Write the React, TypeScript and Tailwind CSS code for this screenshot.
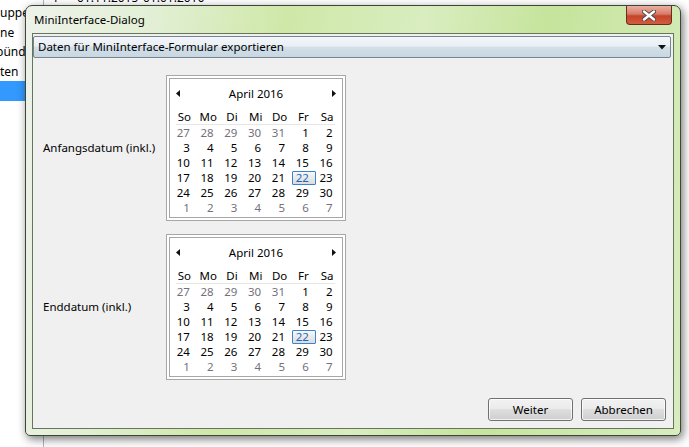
import React from 'react';

const dayNames = ['So', 'Mo', 'Di', 'Mi', 'Do', 'Fr', 'Sa'];

// 27. März bis 7. Mai, sechs Wochen
const cells = [
  ...[27, 28, 29, 30, 31].map(d => ({ d, muted: true })),
  ...Array.from({ length: 30 }, (_, i) => ({ d: i + 1, muted: false })),
  ...[1, 2, 3, 4, 5, 6, 7].map(d => ({ d, muted: true })),
];

function Arrow({ dir }: { dir: 'left' | 'right' }) {
  return (
    <svg width="4" height="7" viewBox="0 0 4 7" className="block">
      <polygon points={dir === 'left' ? '4,0 0,3.5 4,7' : '0,0 4,3.5 0,7'} fill="#111" />
    </svg>
  );
}

function Calendar() {
  return (
    <div className="w-[180px] h-[146px] shrink-0 border border-[#a7a7a7] bg-white p-[2px]">
      <div className="h-full border border-[#a7a7a7] pt-[7px]">
        <div className="relative h-[15px] flex items-center justify-center leading-[15px] text-black">
          <span className="absolute left-[6px] top-[4px]"><Arrow dir="left" /></span>
          April 2016
          <span className="absolute right-[6px] top-[4px]"><Arrow dir="right" /></span>
        </div>
        <div className="mt-[8px] grid grid-cols-[repeat(7,23.8px)] h-[15px] leading-[15px] text-black">
          {dayNames.map(n => (
            <div key={n} className="text-center pl-[5px]">{n}</div>
          ))}
        </div>
        <div className="ml-[6px] w-[159px] h-px bg-[#e6e6e6]" />
        <div className="grid grid-cols-[repeat(7,23.8px)]">
          {cells.map((c, i) => {
            const isToday = !c.muted && c.d === 22;
            return (
              <div
                key={i}
                className={`relative h-[15px] pr-1 text-right leading-[15px] ${c.muted ? 'text-[#74707a]' : 'text-black'}`}
              >
                {isToday && (
                  <span className="absolute left-[3px] top-px h-[14px] w-[24px] rounded-[1px] border border-[#3a84cf] bg-[linear-gradient(to_bottom,#f7f7f7,#dcdcdc)]" />
                )}
                <span className={`relative ${isToday ? 'text-[#1a66c2]' : ''}`}>{c.d}</span>
              </div>
            );
          })}
        </div>
      </div>
    </div>
  );
}

function DateRow({ label }: { label: string }) {
  return (
    <div className="flex items-center pl-[10px]">
      <div className="w-[123px] shrink-0 text-black">{label}</div>
      <Calendar />
    </div>
  );
}

export default function App() {
  return (
    <div className="relative w-[689px] h-[447px] overflow-hidden bg-white font-['Noto_Sans',sans-serif] text-[11.5px]">
      {/* Fenster dahinter */}
      <div className="flex h-full">
        <div className="w-[44px] shrink-0 border-r border-[#a9b6c4] overflow-hidden pt-[3px] text-[12px] text-black">
          <div className="h-[19.5px] leading-[19.5px] whitespace-nowrap">uppen</div>
          <div className="h-[19.5px] leading-[19.5px] whitespace-nowrap">ne</div>
          <div className="h-[19.5px] leading-[19.5px] whitespace-nowrap -ml-[4px]">bünd</div>
          <div className="h-[19.5px] leading-[19.5px] whitespace-nowrap">ten</div>
          <div className="h-[19.5px] bg-[#3399ff]" />
        </div>
        <div className="flex-1 -mt-[9px] text-[12px] text-black">
          <div className="flex h-[14px] leading-[14px] whitespace-nowrap pl-[8px]">
            <span className="w-[25px]">1</span>
            <span className="w-[66px]">01.11.2015</span>
            <span>01.01.2016</span>
          </div>
        </div>
      </div>

      {/* Dialog */}
      <div className="absolute left-[25px] top-[5px] w-[656px] h-[431px] flex flex-col rounded-t-[7px] rounded-b-[5px] border border-[#3b4636] px-[6px] pb-[6px] shadow-[2px_3px_10px_rgba(0,0,0,0.55)] bg-[linear-gradient(100deg,#eef2ea_0%,#e2efd4_18%,#cfe8a8_36%,#d9edc0_55%,#c6e49c_72%,#d8edc0_100%)]">
        <div className="h-[27px] shrink-0 flex items-center pl-[2px] pt-[1px] text-black">MiniInterface-Dialog</div>
        <div className="absolute right-[8px] top-0 w-[46px] h-[19px] flex items-center justify-center rounded-b-[4px] border border-t-0 border-[#6d2a1e] bg-[linear-gradient(to_bottom,#eab0a2_0%,#d77c68_45%,#c4432a_55%,#d35c40_100%)]">
          <svg width="14" height="11" viewBox="0 0 14 11">
            <path d="M2 1.5 L12 9.5 M12 1.5 L2 9.5" stroke="#4a4a4a" strokeWidth="4.2" strokeLinecap="round" />
            <path d="M2 1.5 L12 9.5 M12 1.5 L2 9.5" stroke="#ffffff" strokeWidth="2.4" strokeLinecap="round" />
          </svg>
        </div>

        <div className="flex-1 flex flex-col border border-[#66765c] bg-[#f0f0f0]">
          <div className="mt-[2px] mr-[2px] h-[22px] flex items-center justify-between rounded-[2px] border border-[#77858f] pl-[4px] pr-[4px] text-black bg-[linear-gradient(to_bottom,#f3f6f9_0%,#e9eff4_45%,#d3dfe8_52%,#c7d7e2_100%)]">
            <span>Daten für MiniInterface-Formular exportieren</span>
            <svg width="8" height="5" viewBox="0 0 8 5">
              <polygon points="0,0 8,0 4,4.5" fill="#111" />
            </svg>
          </div>

          <div className="mt-[17px] flex flex-col gap-[13px]">
            <DateRow label="Anfangsdatum (inkl.)" />
            <DateRow label="Enddatum (inkl.)" />
          </div>

          <div className="mt-auto mb-[7px] pr-[7px] flex justify-end gap-[8px]">
            {['Weiter', 'Abbrechen'].map(t => (
              <button
                key={t}
                className="w-[85px] h-[23px] rounded-[3px] border border-[#707070] text-black shadow-[inset_0_0_0_1px_rgba(255,255,255,0.75)] bg-[linear-gradient(to_bottom,#f2f2f2_0%,#ebebeb_45%,#dddddd_52%,#cfcfcf_100%)]"
              >
                {t}
              </button>
            ))}
          </div>
        </div>
      </div>
    </div>
  );
}
